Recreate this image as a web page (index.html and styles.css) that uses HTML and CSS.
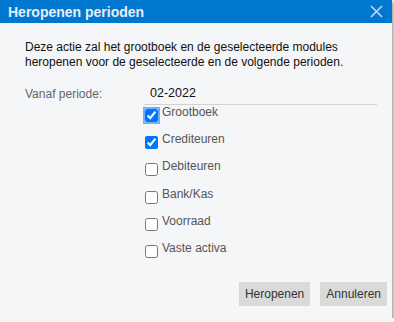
FILE: index.html
```html
<!DOCTYPE html>
<html lang="nl">
<head>
  <meta charset="UTF-8">
  <title>Heropenen perioden</title>
  <link rel="stylesheet" href="styles.css">
</head>
<body>

<div class="dialog">
  <div class="dialog-header">
    <span class="dialog-title">Heropenen perioden</span>
    <svg class="dialog-close" width="13" height="13" viewBox="0 0 13 13">
      <path d="M1 1 L12 12 M12 1 L1 12" stroke="currentColor" stroke-width="1.6" fill="none"/>
    </svg>
  </div>

  <div class="dialog-body">
    <p class="intro">Deze actie zal het grootboek en de geselecteerde modules heropenen voor de geselecteerde en de volgende perioden.</p>

    <div class="field">
      <label class="field-label">Vanaf periode:</label>
      <div class="field-value">02-2022</div>
    </div>

    <ul class="modules">
      <li><input type="checkbox" class="focused" checked><span>Grootboek</span></li>
      <li><input type="checkbox" checked><span>Crediteuren</span></li>
      <li><input type="checkbox"><span>Debiteuren</span></li>
      <li><input type="checkbox"><span>Bank/Kas</span></li>
      <li><input type="checkbox"><span>Voorraad</span></li>
      <li><input type="checkbox"><span>Vaste activa</span></li>
    </ul>
  </div>

  <div class="dialog-footer">
    <button>Heropenen</button>
    <button>Annuleren</button>
  </div>
</div>

</body>
</html>
```

FILE: styles.css
```css
body { margin: 0; font-family: "Liberation Sans", Arial, sans-serif; font-size: 12px; background: #f5f6f8; }
.dialog { width: 392px; height: 318px; display: flex; flex-direction: column; background: #f5f6f8; box-shadow: 1px 2px 3px rgba(0,0,0,0.45); }
.dialog-header { height: 23px; background: #0078d0; color: #e6eef8; display: flex; align-items: center; justify-content: space-between; padding: 0 9px 0 8px; }
.dialog-title { font-size: 14px; font-weight: bold; }
.dialog-close { color: #bcd8f2; }
.dialog-body { flex: 1; padding: 17px 15px 0 25px; }
.intro { margin: 0; line-height: 15px; color: #111; }
.field { display: flex; align-items: center; margin-top: 13px; }
.field-label { width: 119px; color: #666; }
.field-value { flex: 1; padding: 3px 6px 4px; border-bottom: 1px solid #d2d2d2; color: #111; font-size: 12.5px; }
.modules { list-style: none; margin: 3px 0 0 119px; padding: 0; }
.modules li { display: flex; align-items: flex-start; height: 27.2px; color: #555; }
.modules input { width: 13px; height: 13px; margin: 1px 4px 0 1px; }
.modules input.focused { outline: 2px solid rgba(16,110,255,0.55); outline-offset: 0; border-radius: 2px; }
.modules span { line-height: 8px; }
.dialog-footer { display: flex; justify-content: flex-end; gap: 10px; padding: 0 5px 12px 0; }
button { font-family: inherit; font-size: 12px; color: #333; background: #dadada; border: none; height: 24px; padding: 0 6px; border-radius: 0; }
```
